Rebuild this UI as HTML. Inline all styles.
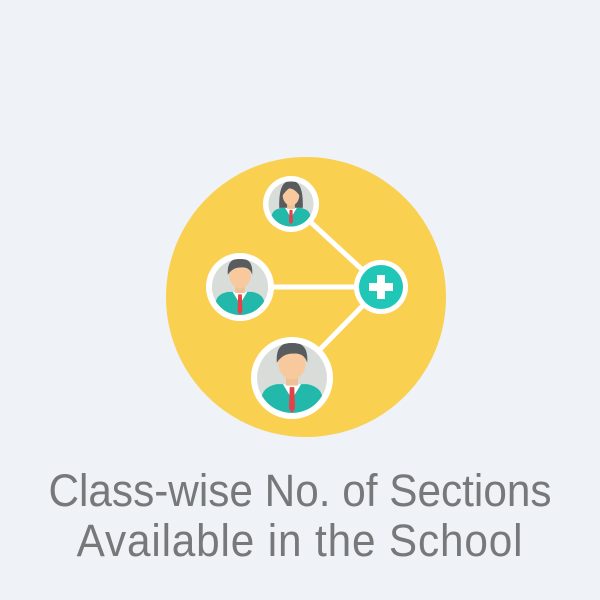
<!DOCTYPE html>
<html><head><style>
html,body{margin:0;padding:0}
body{width:600px;height:600px;background:#eff2f7;position:relative;overflow:hidden;font-family:"Liberation Sans",sans-serif}
.t{position:absolute;left:0;width:600px;text-align:center;color:#76787a;font-size:45px;line-height:1;transform:scaleX(0.94)}
</style></head><body>
<svg width="600" height="600" style="position:absolute;left:0;top:0">
<defs>
<g id="p">
<rect x="-30" y="-30" width="60" height="60" fill="#d9ddd9"/>
<path d="M-20 30 L-20 14 Q-20 6 -10 4 L10 4 Q20 6 20 14 L20 30Z" fill="#23b9aa"/>
<path d="M-6 4 L0 14 L6 4Z" fill="#fff"/>
<path d="M-1.5 6 L1.5 6 L2 20 L0 23 L-2 20Z" fill="#e8404a"/>
<rect x="-4" y="-2" width="8" height="7" fill="#f0c096"/>
<ellipse cx="0" cy="-10" rx="9" ry="11" fill="#f8c99c"/>
<path d="M-10 -10 Q-11 -24 0 -23 Q11 -24 10 -10 Q8 -17 0 -16 Q-6 -16 -10 -10Z" fill="#585c5e"/>
</g>
<g id="f">
<rect x="-30" y="-30" width="60" height="60" fill="#d9ddd9"/>
<path d="M-12 4 Q-13 -24 0 -24 Q13 -24 12 4Z" fill="#585c5e"/>
<path d="M-20 30 L-20 14 Q-20 6 -10 4 L10 4 Q20 6 20 14 L20 30Z" fill="#23b9aa"/>
<path d="M-6 4 L0 14 L6 4Z" fill="#fff"/>
<path d="M-1.5 6 L1.5 6 L2 18 L0 21 L-2 18Z" fill="#e8404a"/>
<rect x="-4" y="-2" width="8" height="7" fill="#f0c096"/>
<ellipse cx="0" cy="-9" rx="8.5" ry="10.5" fill="#f8c99c"/>
<path d="M-9 -8 Q-10 -22 0 -21 Q10 -22 9 -8 Q4 -16 -2 -16 Q-6 -13 -9 -8Z" fill="#585c5e"/>
</g>
<clipPath id="c1"><circle cx="0" cy="0" r="23"/></clipPath>
</defs>
<circle cx="306" cy="297" r="140" fill="#f9d04f"/>
<g stroke="#fff" stroke-width="5">
<line x1="291" y1="204" x2="381" y2="287"/>
<line x1="240" y1="287" x2="381" y2="287"/>
<line x1="292" y1="378" x2="381" y2="287"/>
</g>
<circle cx="291" cy="204" r="28" fill="#fff"/>
<g transform="translate(291,204) scale(0.98)" clip-path="url(#c1)"><use href="#f"/></g>
<circle cx="240" cy="287" r="34" fill="#fff"/>
<g transform="translate(240,287) scale(1.22)" clip-path="url(#c1)"><use href="#p"/></g>
<circle cx="292" cy="378" r="41" fill="#fff"/>
<g transform="translate(292,378) scale(1.52)" clip-path="url(#c1)"><use href="#p"/></g>
<circle cx="381" cy="287" r="27" fill="#fff"/>
<circle cx="381" cy="287" r="22" fill="#20c6b6"/>
<rect x="369" y="283" width="24" height="8" fill="#fff"/>
<rect x="377" y="275" width="8" height="24" fill="#fff"/>
</svg>
<div class="t" style="top:468px">Class-wise No. of Sections</div>
<div class="t" style="top:518px;letter-spacing:0.9px">Available in the School</div>
</body></html>
